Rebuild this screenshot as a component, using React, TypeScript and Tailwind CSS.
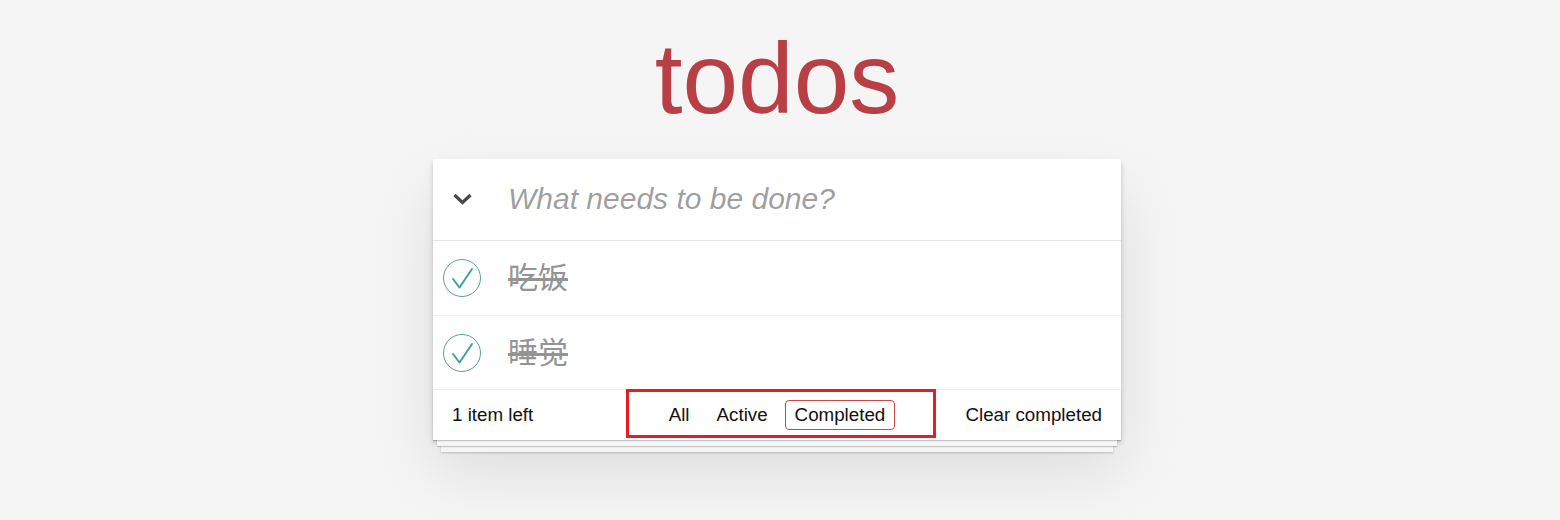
import React from 'react';

const todos = [
  { id: 1, title: '吃饭', done: true },
  { id: 2, title: '睡觉', done: true },
];

function CheckCircle(): React.ReactNode {
  return (
    <svg width="40" height="40" viewBox="0 0 40 40" fill="none">
      <circle cx="20" cy="20" r="18.5" stroke="#59a193" strokeWidth="1" />
      <polyline
        points="11,21 17.5,29.5 30,11"
        stroke="#3ea390"
        strokeWidth="2"
        strokeLinecap="round"
        strokeLinejoin="round"
      />
    </svg>
  );
}

export default function App(): React.ReactNode {
  return (
    <div className="flex min-h-screen flex-col items-center bg-[#f5f5f5] pr-[6px] font-['Liberation_Sans',Arial,sans-serif]">
      <h1 className="mt-[28px] h-[100px] text-[100px] leading-[100px] font-normal text-[#b83f45]">todos</h1>

      <section className="relative mt-[31px] w-[688px] bg-white shadow-[0_2.5px_5px_0_rgba(0,0,0,0.2),0_31px_62px_0_rgba(0,0,0,0.1)]">
        <header className="flex h-[82px] items-center border-b border-[#e6e6e6]">
          <div className="flex w-[75px] shrink-0 pb-[1px] pl-[20px]">
            <svg width="19" height="12" viewBox="0 0 19 12" fill="none">
              <polyline points="1.5,2 9.5,9.5 17.5,2" stroke="#484848" strokeWidth="3.2" />
            </svg>
          </div>
          <input
            className="h-full flex-1 bg-transparent pb-[1px] text-[30px] text-[#4d4d4d] outline-none placeholder:italic placeholder:text-black/40"
            placeholder="What needs to be done?"
          />
        </header>

        <ul>
          {todos.map((t, i) => (
            <li
              key={t.id}
              className={`flex items-center border-b border-[#ededed] ${i === 0 ? 'h-[75px]' : 'h-[74px]'}`}
            >
              <div className="flex w-[75px] shrink-0 pl-[9px]">
                <CheckCircle />
              </div>
              <span className="text-[30px] leading-[36px] text-[#949494] line-through font-['Liberation_Sans','Noto_Sans_CJK_SC',sans-serif]">
                {t.title}
              </span>
            </li>
          ))}
        </ul>

        <footer className="relative grid h-[50px] grid-cols-[1fr_auto_1fr] items-center px-[19px] text-[18.75px] text-[#111111]">
          <div className="pointer-events-none absolute inset-x-0 bottom-0 h-[50px] overflow-hidden shadow-[0_1px_1px_rgba(0,0,0,0.2),0_10px_0_-4px_#f6f6f6,0_11px_1px_-4px_rgba(0,0,0,0.2),0_20px_0_-8px_#f6f6f6,0_21px_2px_-8px_rgba(0,0,0,0.2)]" />
          <span className="relative">1 item left</span>
          <ul className="relative mb-[1px] flex">
            <li>
              <a className="mx-[3.75px] block rounded-[4px] border border-transparent px-[8.75px] py-[3.5px] leading-[21px]">All</a>
            </li>
            <li>
              <a className="mx-[3.75px] block rounded-[4px] border border-transparent px-[8.75px] py-[3.5px] leading-[21px]">Active</a>
            </li>
            <li>
              <a className="mx-[3.75px] block rounded-[4px] border border-[#ce4646] px-[8.75px] py-[3.5px] leading-[21px]">Completed</a>
            </li>
          </ul>
          <span className="relative text-right">Clear completed</span>
        </footer>

        <div className="pointer-events-none absolute left-[193px] top-[230px] h-[49px] w-[310px] border-[3px] border-[#e81c24]" />
      </section>
    </div>
  );
}
